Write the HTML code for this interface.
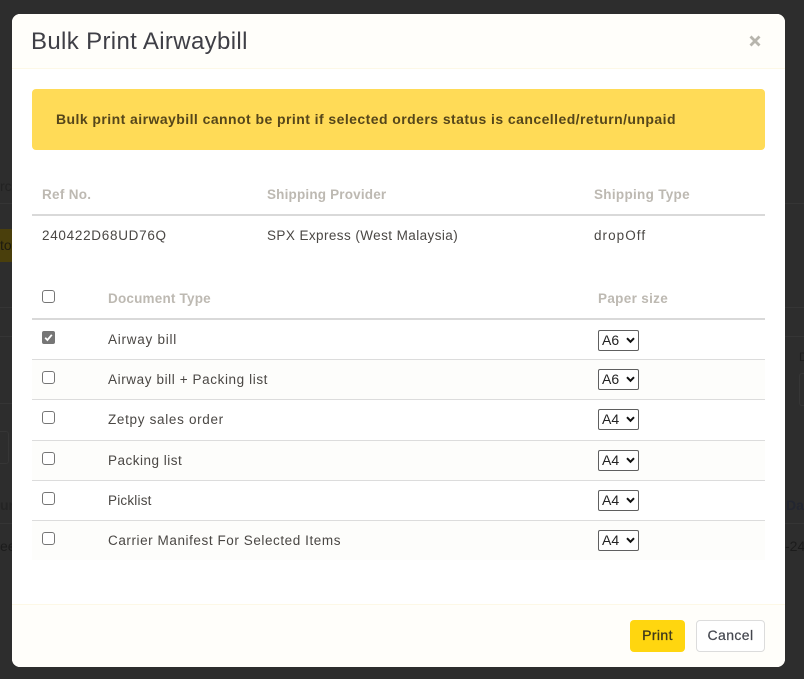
<!DOCTYPE html>
<html>
<head>
<meta charset="utf-8">
<style>
html,body{margin:0;padding:0;width:804px;height:679px;overflow:hidden;background:#2d2d2d;font-family:"Liberation Sans",sans-serif;}
.a{position:absolute;white-space:nowrap;}
.bgt{color:#1e1e1e;font-size:14px;line-height:16px;}
.bgl{position:absolute;height:1px;background:#353535;}
#m{position:absolute;left:12px;top:14px;width:773px;height:653px;background:#fff;border-radius:8px;overflow:hidden;}
.t{position:absolute;white-space:nowrap;font-size:13.5px;line-height:18px;color:#4a4744;letter-spacing:.35px;}
.h{position:absolute;white-space:nowrap;font-size:13.5px;line-height:18px;color:#bdb9b2;font-weight:bold;letter-spacing:.3px;}
.l{position:absolute;left:20px;width:733px;height:1px;background:#dcdcdc;}
.r{position:absolute;left:20px;width:733px;background:#fdfdfb;}
.c{position:absolute;left:30px;width:13px;height:13px;box-sizing:border-box;border:1px solid #767676;border-radius:3px;background:#fff;}
.c.on{background:#767676;}
.s{position:absolute;left:586px;width:41px;height:21px;box-sizing:border-box;border:1px solid #5f5f5f;border-radius:2px;background:#fff;font-size:14px;line-height:19px;color:#222;padding-left:3px;}
.s svg{position:absolute;left:27px;top:6px;}
</style>
</head>
<body>
<div class="a bgt" style="left:0;top:178px;color:#222">rc</div>
<div class="bgl" style="left:0;top:203px;width:12px"></div>
<div class="a" style="left:0;top:229px;width:12px;height:33px;background:#4a3f0c"></div>
<div class="a bgt" style="left:0;top:237px;color:#1c1a10">to</div>
<div class="bgl" style="left:0;top:307px;width:12px"></div>
<div class="bgl" style="left:0;top:336px;width:12px"></div>
<div class="bgl" style="left:0;top:403px;width:12px"></div>
<div class="a" style="left:-8px;top:431px;width:15px;height:31px;border:1px solid #363636;border-radius:3px"></div>
<div class="a bgt" style="left:0;top:497px;font-weight:bold;color:#242424">ur</div>
<div class="bgl" style="left:0;top:523px;width:12px"></div>
<div class="a bgt" style="left:0;top:538px;color:#1c1c1c">ee</div>
<div class="bgl" style="left:785px;top:203px;width:19px"></div>
<div class="bgl" style="left:785px;top:307px;width:19px"></div>
<div class="bgl" style="left:785px;top:336px;width:19px"></div>
<div class="a bgt" style="left:799px;top:349px;font-size:12px">D</div>
<div class="a" style="left:799px;top:373px;width:15px;height:31px;border:1px solid #363636;border-radius:3px"></div>
<div class="a bgt" style="left:786px;top:497px;font-weight:bold;color:#232630">Da</div>
<div class="bgl" style="left:785px;top:523px;width:19px"></div>
<div class="a bgt" style="left:785px;top:538px;color:#1c1c1c">-24</div>

<div id="m">
  <div class="a" style="left:0;top:0;width:773px;height:54px;background:#fffefa;border-bottom:1px solid #fdf8e6"></div>
  <div class="a" style="left:19px;top:13px;font-size:24px;line-height:30px;color:#3f3f46;letter-spacing:.35px">Bulk Print Airwaybill</div>
  <svg class="a" style="left:737px;top:21px" width="12" height="12" viewBox="0 0 12 12"><path d="M1.5 1.5L10.5 10.5M10.5 1.5L1.5 10.5" stroke="#b7b5ad" stroke-width="2.8" fill="none"/></svg>

  <div class="a" style="left:20px;top:75px;width:733px;height:61px;background:#ffdb57;border-radius:4px"></div>
  <div class="a" style="left:44px;top:96px;font-size:14px;line-height:18px;font-weight:bold;color:#55461a;letter-spacing:.44px">Bulk print airwaybill cannot be print if selected orders status is cancelled/return/unpaid</div>

  <div class="h" style="left:30px;top:172px">Ref No.</div>
  <div class="h" style="left:255px;top:172px;letter-spacing:.18px">Shipping Provider</div>
  <div class="h" style="left:582px;top:172px">Shipping Type</div>
  <div class="l" style="top:200px;height:2px;background:#d9d9d9"></div>
  <div class="t" style="left:30px;top:213px;letter-spacing:.71px">240422D68UD76Q</div>
  <div class="t" style="left:255px;top:213px;letter-spacing:.42px">SPX Express (West Malaysia)</div>
  <div class="t" style="left:582px;top:213px;letter-spacing:1.05px">dropOff</div>

  <div class="c" style="top:276px"></div>
  <div class="h" style="left:96px;top:276px;letter-spacing:.2px">Document Type</div>
  <div class="h" style="left:586px;top:276px;letter-spacing:.33px">Paper size</div>
  <div class="l" style="top:304px;height:2px;background:#d9d9d9"></div>

  <div class="r" style="top:346px;height:40px"></div>
  <div class="r" style="top:427px;height:40px"></div>
  <div class="r" style="top:507px;height:39px"></div>
  <div class="l" style="top:345px"></div>
  <div class="l" style="top:385px"></div>
  <div class="l" style="top:426px"></div>
  <div class="l" style="top:466px"></div>
  <div class="l" style="top:506px"></div>

  <div class="c on" style="top:317px;border-radius:2px"><svg style="position:absolute;left:1px;top:1px" width="9" height="9" viewBox="0 0 9 9"><path d="M1.2 4.8L3.4 7L7.8 1.8" stroke="#fff" stroke-width="1.8" fill="none"/></svg></div>
  <div class="c" style="top:357px"></div>
  <div class="c" style="top:397px"></div>
  <div class="c" style="top:438px"></div>
  <div class="c" style="top:478px"></div>
  <div class="c" style="top:518px"></div>

  <div class="t" style="left:96px;top:317px;letter-spacing:.75px">Airway bill</div>
  <div class="t" style="left:96px;top:357px;letter-spacing:.6px">Airway bill + Packing list</div>
  <div class="t" style="left:96px;top:397px;letter-spacing:.68px">Zetpy sales order</div>
  <div class="t" style="left:96px;top:438px;letter-spacing:.5px">Packing list</div>
  <div class="t" style="left:96px;top:478px;letter-spacing:.2px">Picklist</div>
  <div class="t" style="left:96px;top:518px;letter-spacing:.57px">Carrier Manifest For Selected Items</div>

  <div class="s" style="top:316px;top:315.5px">A6<svg width="9" height="7" viewBox="0 0 9 7"><path d="M1 1.2L4.5 4.8L8 1.2" stroke="#111" stroke-width="2" fill="none"/></svg></div>
  <div class="s" style="top:355px">A6<svg width="9" height="7" viewBox="0 0 9 7"><path d="M1 1.2L4.5 4.8L8 1.2" stroke="#111" stroke-width="2" fill="none"/></svg></div>
  <div class="s" style="top:395px">A4<svg width="9" height="7" viewBox="0 0 9 7"><path d="M1 1.2L4.5 4.8L8 1.2" stroke="#111" stroke-width="2" fill="none"/></svg></div>
  <div class="s" style="top:436px">A4<svg width="9" height="7" viewBox="0 0 9 7"><path d="M1 1.2L4.5 4.8L8 1.2" stroke="#111" stroke-width="2" fill="none"/></svg></div>
  <div class="s" style="top:476px">A4<svg width="9" height="7" viewBox="0 0 9 7"><path d="M1 1.2L4.5 4.8L8 1.2" stroke="#111" stroke-width="2" fill="none"/></svg></div>
  <div class="s" style="top:516px">A4<svg width="9" height="7" viewBox="0 0 9 7"><path d="M1 1.2L4.5 4.8L8 1.2" stroke="#111" stroke-width="2" fill="none"/></svg></div>

  <div class="a" style="left:0;top:590px;width:773px;height:63px;background:#fffefa;border-top:1px solid #fdf8e6"></div>
  <div class="a" style="left:618px;top:606px;width:55px;height:32px;background:#ffd60f;border-radius:4px;text-align:center;font-size:14px;line-height:30px;color:#3f3a1c;letter-spacing:.4px;-webkit-text-stroke:.3px #3f3a1c">Print</div>
  <div class="a" style="left:684px;top:606px;width:69px;height:32px;box-sizing:border-box;background:#fff;border:1px solid #dcdcdc;border-radius:4px;text-align:center;font-size:14px;line-height:28px;color:#44474f;letter-spacing:.4px;-webkit-text-stroke:.2px #44474f">Cancel</div>
</div>
</body>
</html>
